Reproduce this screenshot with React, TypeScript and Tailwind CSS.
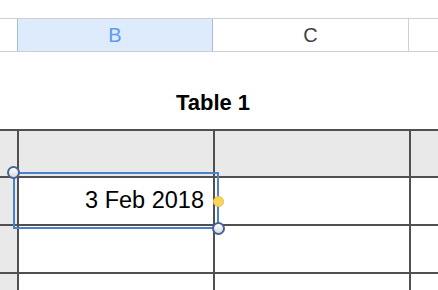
import React from "react";

const font = { fontFamily: '"Liberation Sans", Arial, sans-serif' };

function Handle({ className }: { className: string }) {
  return (
    <div
      className={`absolute w-[13px] h-[13px] rounded-full border-2 border-[#46639c] bg-gradient-to-b from-white to-[#dcdcdc] ${className}`}
    />
  );
}

export default function App() {
  const rows = [0, 1, 2];
  return (
    <div className="w-[438px] h-[290px] bg-white overflow-hidden relative" style={font}>
      {/* column headers */}
      <div className="mt-[18px] flex h-[34px] border-y border-[#cfcfcf]">
        <div className="w-[17px] shrink-0" />
        <div className="w-[196px] shrink-0 bg-[#deebfc] border-x border-[#a8bcd9] flex items-center justify-center text-[20px] text-[#5c9cf2]">
          B
        </div>
        <div className="w-[196px] shrink-0 border-r border-[#cfcfcf] flex items-center justify-center text-[20px] text-[#404040]">
          C
        </div>
        <div className="flex-1" />
      </div>

      {/* title */}
      <div className="h-[77px] flex items-end pb-[15px]">
        <div className="ml-[17px] w-[392px] text-center text-[22px] font-bold text-black leading-none">
          Table 1
        </div>
      </div>

      {/* table */}
      <div className="border-t-2 border-[#505050]">
        <div className="flex h-[47px] border-b-2 border-[#505050] bg-[#e9e9e9]">
          <div className="w-[19px] shrink-0 border-r-2 border-[#505050]" />
          <div className="w-[196px] shrink-0 border-r-2 border-[#505050]" />
          <div className="w-[196px] shrink-0 border-r-2 border-[#505050]" />
          <div className="flex-1" />
        </div>
        {rows.map((r) => (
          <div key={r} className="flex h-[48px] border-b-2 border-[#505050]">
            <div className="w-[19px] shrink-0 border-r-2 border-[#505050] bg-[#e9e9e9]" />
            <div className="w-[196px] shrink-0 border-r-2 border-[#505050] flex items-center justify-end pr-[9px] text-[23.5px] text-black">
              {r === 0 ? "3 Feb 2018" : ""}
            </div>
            <div className="w-[196px] shrink-0 border-r-2 border-[#505050]" />
            <div className="flex-1" />
          </div>
        ))}
      </div>

      {/* selection overlay */}
      <div className="absolute left-[13px] top-[172px] w-[206px] h-[57px] border-2 border-[#4a80cc]" />
      <Handle className="left-[7px] top-[166px]" />
      <Handle className="left-[212px] top-[222px]" />
      <div className="absolute left-[213px] top-[196px] w-[11px] h-[11px] rounded-full bg-[#f8d45a] border border-[#e8c04a]" />
    </div>
  );
}
